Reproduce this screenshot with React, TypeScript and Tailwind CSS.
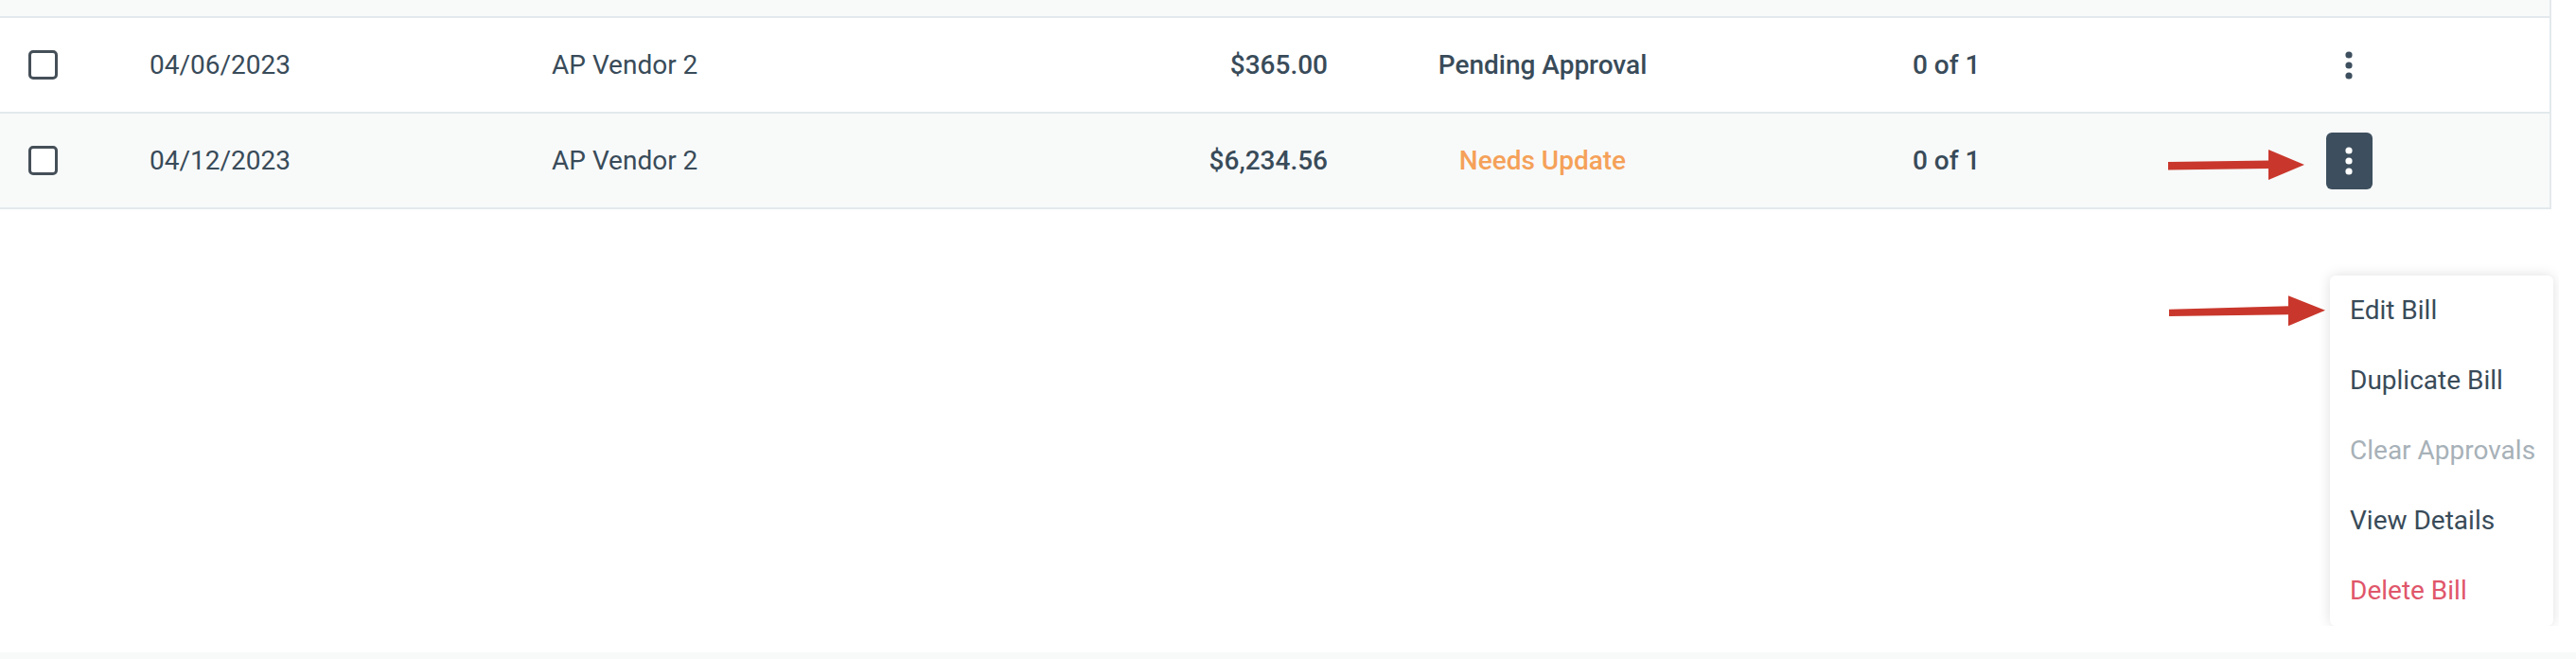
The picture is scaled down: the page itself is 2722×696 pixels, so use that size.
import React from "react";

type Row = {
  date: string;
  vendor: string;
  amount: string;
  status: string;
  statusClass: string;
  approvals: string;
  alt: boolean;
  active: boolean;
};

const rows: Row[] = [
  {
    date: "04/06/2023",
    vendor: "AP Vendor 2",
    amount: "$365.00",
    status: "Pending Approval",
    statusClass: "text-[#394b59]",
    approvals: "0 of 1",
    alt: false,
    active: false,
  },
  {
    date: "04/12/2023",
    vendor: "AP Vendor 2",
    amount: "$6,234.56",
    status: "Needs Update",
    statusClass: "text-[#f5a159]",
    approvals: "0 of 1",
    alt: true,
    active: true,
  },
];

function Dots({ color }: { color: string }) {
  return (
    <svg width="8" height="30" viewBox="0 0 8 30">
      <circle cx="4" cy="4" r="3.6" fill={color} />
      <circle cx="4" cy="15" r="3.6" fill={color} />
      <circle cx="4" cy="26" r="3.6" fill={color} />
    </svg>
  );
}

function Checkbox() {
  return <div className="w-[31px] h-[31px] rounded-[5px] border-[3px] border-[#454f58] bg-white" />;
}

export default function App() {
  return (
    <div className="relative w-[2722px] h-[696px] bg-white overflow-hidden font-['Roboto','Liberation_Sans',sans-serif] text-[28px] text-[#394b59] flex flex-col">
      {/* table */}
      <div className="w-[2696px] border-r-2 border-[#e3e9ec] flex flex-col">
        <div className="h-[19px] bg-[#f8fafa] border-b-2 border-[#e3e9ec]" />
        {rows.map((r, i) => (
          <div
            key={i}
            className={`h-[101px] border-b-2 border-[#e3e9ec] grid grid-cols-[158px_425px_417px_403px_454px_413px_424px] items-center ${
              r.alt ? "bg-[#f8fafa]" : "bg-white"
            }`}
          >
            <div className="pl-[30px] flex items-center">
              <Checkbox />
            </div>
            <div>{r.date}</div>
            <div>{r.vendor}</div>
            <div className="text-right font-medium">{r.amount}</div>
            <div className={`text-center font-medium ${r.statusClass}`}>{r.status}</div>
            <div className="pl-[164px] font-medium">{r.approvals}</div>
            <div className="flex justify-center">
              {r.active ? (
                <div className="w-[49px] h-[60px] rounded-[6px] bg-[#3d4f5e] flex items-center justify-center">
                  <Dots color="#ffffff" />
                </div>
              ) : (
                <div className="w-[49px] h-[60px] flex items-center justify-center">
                  <Dots color="#3d4f5e" />
                </div>
              )}
            </div>
          </div>
        ))}
      </div>

      <div className="flex-1" />
      <div className="h-[7px] bg-[#f8fafa]" />

      {/* arrow pointing to the kebab button */}
      <svg className="absolute left-[2290px] top-[156px]" width="148" height="36" viewBox="0 0 148 36">
        <polygon points="1,15 108,13.5 108,22 1,23.5" fill="#c9372c" />
        <polygon points="107,2 145,18 107,34" fill="#c9372c" />
      </svg>

      {/* arrow pointing to Edit Bill */}
      <svg className="absolute left-[2290px] top-[310px]" width="170" height="36" viewBox="0 0 170 36">
        <polygon points="2,16.7 129,13.3 129,22.3 2,24" fill="#c9372c" />
        <polygon points="128,2.3 167,17.7 128,34.3" fill="#c9372c" />
      </svg>

      {/* dropdown menu */}
      <div className="absolute left-[2442px] top-[271px] w-[262px] h-[390px] overflow-hidden pt-[20px] pl-[20px]">
        <div className="w-[236px] h-[370px] bg-white rounded-[6px] shadow-[0_0_14px_rgba(0,0,0,0.13)] flex flex-col">
          <div className="h-[74px] flex items-center px-[21px] whitespace-nowrap text-[#394b59]">Edit Bill</div>
          <div className="h-[74px] flex items-center px-[21px] whitespace-nowrap text-[#394b59]">Duplicate Bill</div>
          <div className="h-[74px] flex items-center px-[21px] whitespace-nowrap text-[#a7b1b8]">Clear Approvals</div>
          <div className="h-[74px] flex items-center px-[21px] whitespace-nowrap text-[#394b59]">View Details</div>
          <div className="h-[74px] flex items-center px-[21px] whitespace-nowrap text-[#e0566a]">Delete Bill</div>
        </div>
      </div>
    </div>
  );
}
